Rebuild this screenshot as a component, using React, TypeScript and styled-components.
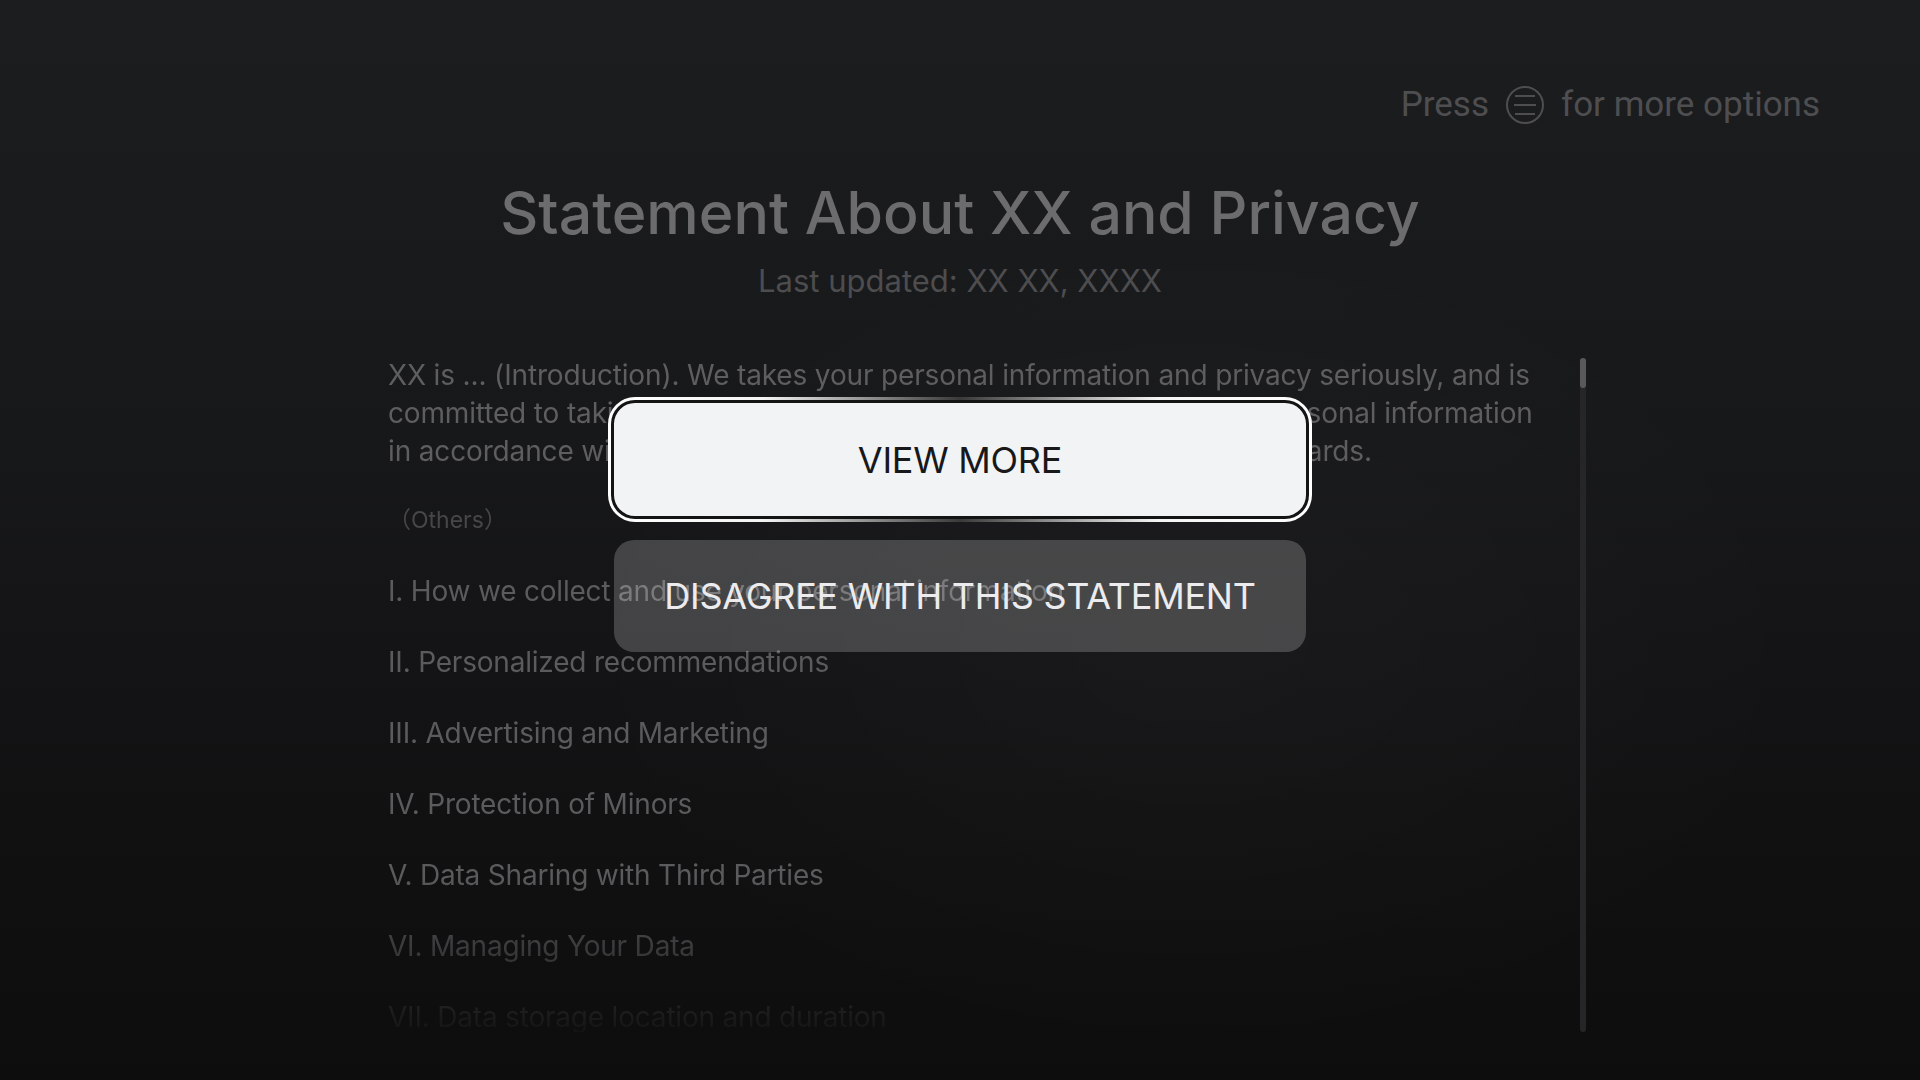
import styled, { createGlobalStyle } from 'styled-components';

const GlobalStyle = createGlobalStyle`
  html, body {
    margin: 0;
    padding: 0;
    background: #0f0f10;
  }
  * {
    box-sizing: border-box;
  }
`;

const Screen = styled.div`
  position: relative;
  width: 1920px;
  height: 1080px;
  overflow: hidden;
  display: flex;
  flex-direction: column;
  font-family: Inter, "Noto Sans", "Noto Sans CJK SC", sans-serif;
  background:
    radial-gradient(ellipse 900px 600px at 62% 60%, rgba(255, 255, 255, 0.025), transparent 70%),
    linear-gradient(180deg, #1c1d1f 0%, #17181a 40%, #111112 75%, #0d0d0e 100%);
`;

const HintBar = styled.div`
  display: flex;
  justify-content: flex-end;
  align-items: center;
  gap: 16px;
  height: 40px;
  margin-top: 85px;
  padding-right: 100px;
  font-family: Roboto, "Liberation Sans", sans-serif;
  font-size: 35px;
  line-height: 40px;
  color: #4e4e50;
`;

const MenuIcon = () => (
  <svg width="40" height="40" viewBox="0 0 40 40" fill="none" stroke="#4e4e50" strokeWidth="2">
    <circle cx="20" cy="20" r="18" />
    <line x1="10" y1="11" x2="30" y2="11" />
    <line x1="9" y1="20" x2="31" y2="20" />
    <line x1="10" y1="29" x2="30" y2="29" />
  </svg>
);

const Title = styled.h1`
  margin: 53px 0 0;
  text-align: center;
  font-size: 59px;
  line-height: 70px;
  font-weight: 500;
  color: #6c6c6e;
`;

const Updated = styled.div`
  margin-top: 13px;
  text-align: center;
  font-size: 31px;
  line-height: 40px;
  color: #4d4d4f;
`;

const Body = styled.div`
  display: flex;
  gap: 32px;
  margin-top: 55px;
  padding-left: 388px;
  height: 676px;
`;

const TextColumn = styled.div`
  width: 1160px;
  height: 100%;
  overflow: hidden;
  mask-image: linear-gradient(180deg, #000 0, #000 520px, transparent 690px);
`;

const Intro = styled.p`
  margin: 0;
  font-size: 28px;
  line-height: 38px;
  letter-spacing: -0.15px;
  color: #5e5e60;
`;

const Note = styled.div`
  margin-top: 34px;
  font-size: 23px;
  line-height: 32px;
  color: #47474a;
`;

const SectionList = styled.ul`
  list-style: none;
  margin: 36px 0 0;
  padding: 0;
  display: flex;
  flex-direction: column;
  gap: 33px;
`;

const Section = styled.li`
  font-size: 28px;
  line-height: 38px;
  letter-spacing: -0.2px;
  color: #5b5b5d;
  white-space: nowrap;
`;

const Track = styled.div`
  position: relative;
  width: 6px;
  height: 674px;
  margin-top: 2px;
  border-radius: 3px;
  background: #262628;
`;

const Thumb = styled.div`
  position: absolute;
  top: 0;
  left: 0;
  width: 6px;
  height: 30px;
  border-radius: 3px;
  background: #59595b;
`;

const Overlay = styled.div`
  position: absolute;
  inset: 0;
  display: flex;
  flex-direction: column;
  align-items: center;
  gap: 18px;
  padding-top: 397px;
`;

const ActionButton = styled.button<{ $focused?: boolean }>`
  display: flex;
  align-items: center;
  justify-content: center;
  padding: 0;
  font-family: Inter, "Noto Sans", sans-serif;
  font-size: 36px;
  letter-spacing: -0.25px;
  cursor: pointer;
  ${({ $focused }) =>
    $focused
      ? `
    width: 704px;
    height: 125px;
    border: 3px solid transparent;
    border-radius: 27px;
    color: #18181a;
    background:
      linear-gradient(#f2f3f5, #f2f3f5) padding-box,
      linear-gradient(90deg, #ffffff 0%, #f4f4f4 22%, #3a3a3a 50%, #f4f4f4 78%, #ffffff 100%) border-box;
    box-shadow: inset 0 0 0 3px #141415;
  `
      : `
    width: 692px;
    height: 112px;
    border: none;
    border-radius: 20px;
    color: #ececee;
    background: rgba(255, 255, 255, 0.2);
  `}
`;

const sections = [
  'I. How we collect and use your personal information',
  'II. Personalized recommendations',
  'III. Advertising and Marketing',
  'IV. Protection of Minors',
  'V. Data Sharing with Third Parties',
  'VI. Managing Your Data',
  'VII. Data storage location and duration',
  'VIII. Contact Us',
];

export default function App() {
  return (
    <>
      <GlobalStyle />
      <Screen>
        <HintBar>
          <span>Press</span>
          <MenuIcon />
          <span>for more options</span>
        </HintBar>
        <Title>Statement About XX and Privacy</Title>
        <Updated>Last updated: XX XX, XXXX</Updated>
        <Body>
          <TextColumn>
            <Intro>
              XX is ... (Introduction). We takes your personal information and privacy seriously, and is
              <br />
              committed to taking appropriate security measures to protect your personal information
              <br />
              in accordance with the applicable laws, regulations and industry standards.
            </Intro>
            <Note>（Others）</Note>
            <SectionList>
              {sections.map((s) => (
                <Section key={s}>{s}</Section>
              ))}
            </SectionList>
          </TextColumn>
          <Track>
            <Thumb />
          </Track>
        </Body>
        <Overlay>
          <ActionButton $focused>VIEW MORE</ActionButton>
          <ActionButton>DISAGREE WITH THIS STATEMENT</ActionButton>
        </Overlay>
      </Screen>
    </>
  );
}
